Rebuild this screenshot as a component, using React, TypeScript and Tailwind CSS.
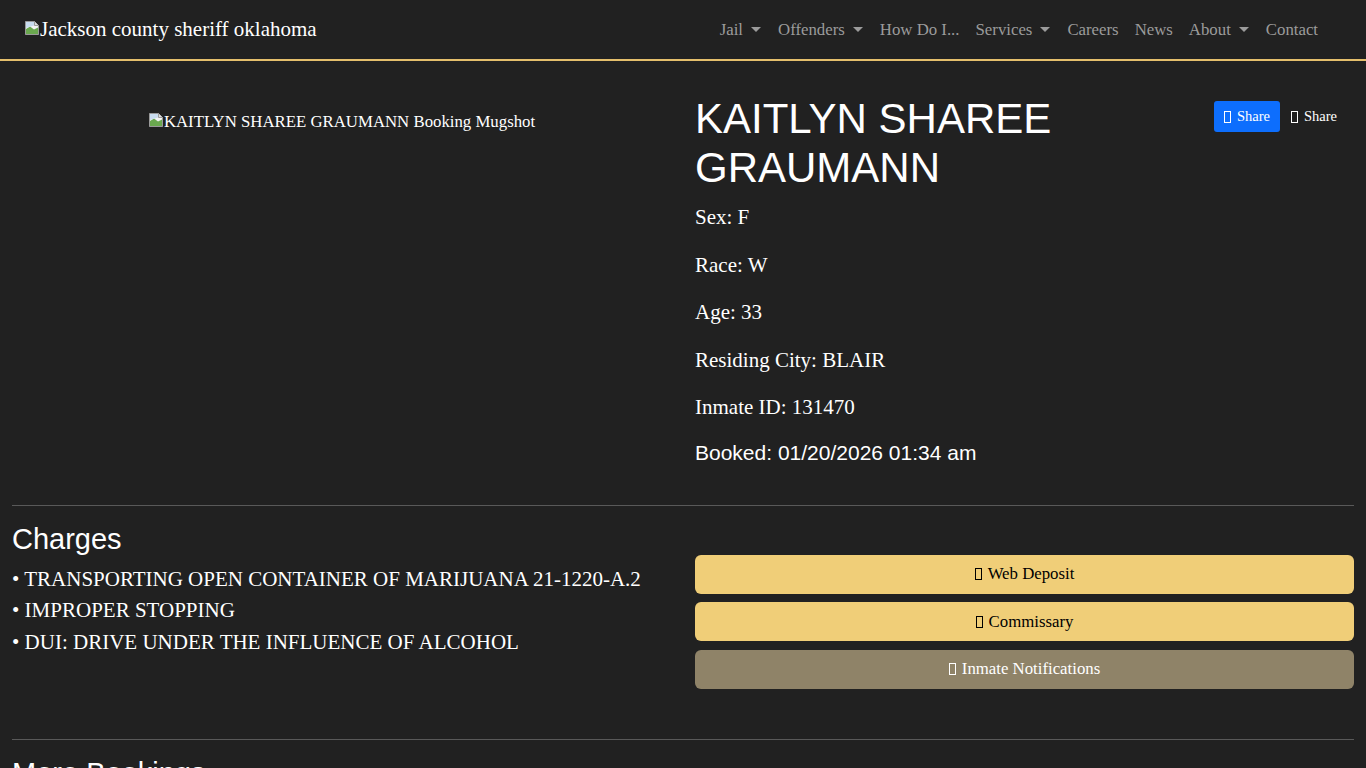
import React from 'react';

const navItems = [
  { label: 'Jail', caret: true },
  { label: 'Offenders', caret: true },
  { label: 'How Do I...', caret: false },
  { label: 'Services', caret: true },
  { label: 'Careers', caret: false },
  { label: 'News', caret: false },
  { label: 'About', caret: true },
  { label: 'Contact', caret: false },
];

const fields = [
  'Sex: F',
  'Race: W',
  'Age: 33',
  'Residing City: BLAIR',
  'Inmate ID: 131470',
];

const charges = [
  'TRANSPORTING OPEN CONTAINER OF MARIJUANA 21-1220-A.2',
  'IMPROPER STOPPING',
  'DUI: DRIVE UNDER THE INFLUENCE OF ALCOHOL',
];

// the broken-image glyph the browser draws for a missing <img>
function BrokenImage() {
  return (
    <svg width="16" height="16" viewBox="0 0 16 16" className="inline-block shrink-0">
      <path d="M1.5 1.5H10.5L14.5 5.5V14.5H1.5Z" fill="#f4f4f4" stroke="#9a9a9a" />
      <path d="M2 9L6 6.5L10 9.5L14 7.5V14H2Z" fill="#6aa84f" />
      <path d="M2 2H10V5.5L2 8Z" fill="#c9dcf0" />
      <path d="M10.5 1.5V5.5H14.5" fill="#dcdcdc" stroke="#9a9a9a" />
    </svg>
  );
}

// missing icon-font glyph, rendered as an empty box
function Tofu() {
  return <span className="inline-block w-[7px] h-[12px] border border-current align-[-1px] mr-[6px]" />;
}

function Caret() {
  return (
    <span className="inline-block w-0 h-0 ml-[8px] mr-[1px] align-[3px] border-x-[5px] border-x-transparent border-t-[5px] border-t-[#9b9b9b]" />
  );
}

export default function App() {
  return (
    <div className="min-h-screen bg-[#212121] text-white font-['Liberation_Serif',serif]">
      <nav className="h-[61px] border-b-2 border-[#e4bf6c] flex items-center justify-between pl-[24px] pr-[40px]">
        <a className="flex items-center text-[21px] leading-none">
          <span className="-mt-[6px]">
            <BrokenImage />
          </span>
          <span>Jackson county sheriff oklahoma</span>
        </a>
        <ul className="flex items-center text-[16.8px] text-[#9b9b9b]">
          {navItems.map((item) => (
            <li key={item.label} className="px-[8px] flex items-center">
              {item.label}
              {item.caret && <Caret />}
            </li>
          ))}
        </ul>
      </nav>

      <main className="px-[12px] pt-[33px]">
        <div className="grid grid-cols-2 gap-x-[24px]">
          <div className="text-center pt-[13px]">
            <span className="inline-flex items-start text-[16.8px] leading-[20px]">
              <span className="-mt-[3px]">
                <BrokenImage />
              </span>
              KAITLYN SHAREE GRAUMANN Booking Mugshot
            </span>
          </div>

          <div>
            <div className="flex items-start">
              <h1 className="flex-1 font-['Liberation_Sans',Arial,sans-serif] text-[42px] leading-[49px] mb-[10px]">
                KAITLYN SHAREE GRAUMANN
              </h1>
              <div className="flex items-center mt-[7px] mr-[17px] text-[14.5px]">
                <button className="bg-[#0d6efd] text-white rounded-[3px] h-[31px] px-[10px] flex items-center">
                  <Tofu />
                  Share
                </button>
                <button className="text-white h-[31px] pl-[11px] flex items-center">
                  <Tofu />
                  Share
                </button>
              </div>
            </div>
            {fields.map((f) => (
              <p key={f} className="text-[21px] leading-[31.5px] mb-[16px]">
                {f}
              </p>
            ))}
            <p className="font-['Liberation_Sans',Arial,sans-serif] text-[21px] leading-[25px]">
              Booked: 01/20/2026 01:34 am
            </p>
          </div>
        </div>

        <div className="h-px bg-[#595959] mt-[40px] mb-[16px]" />

        <div className="grid grid-cols-2 gap-x-[24px]">
          <div>
            <h3 className="font-['Liberation_Sans',Arial,sans-serif] text-[29px] leading-[35px] mb-[7px]">Charges</h3>
            {charges.map((c) => (
              <div key={c} className="text-[21px] leading-[31.5px]">
                • {c}
              </div>
            ))}
          </div>
          <div className="pt-[33px] flex flex-col gap-[8.5px]">
            <button className="h-[39px] rounded-[6px] bg-[#f0ce78] text-black text-[16.8px] flex items-center justify-center">
              <Tofu />
              Web Deposit
            </button>
            <button className="h-[39px] rounded-[6px] bg-[#f0ce78] text-black text-[16.8px] flex items-center justify-center">
              <Tofu />
              Commissary
            </button>
            <button className="h-[39px] rounded-[6px] bg-[#8f8368] text-white text-[16.8px] flex items-center justify-center">
              <Tofu />
              Inmate Notifications
            </button>
          </div>
        </div>

        <div className="h-px bg-[#595959] mt-[50px] mb-[16px]" />

        <h3 className="font-['Liberation_Sans',Arial,sans-serif] text-[29px] leading-[35px] mb-[8px]">More Bookings</h3>
        <div className="h-[200px]" />
      </main>
    </div>
  );
}
